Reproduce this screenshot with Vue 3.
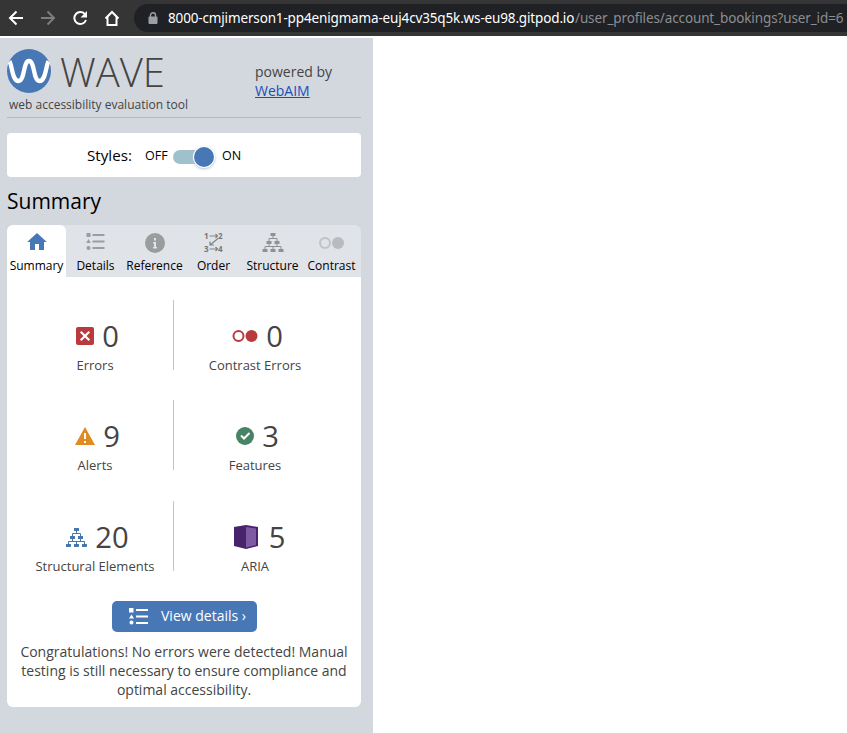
<script setup>
const tabs = [
  { name: 'Summary', icon: 'home' },
  { name: 'Details', icon: 'list' },
  { name: 'Reference', icon: 'info' },
  { name: 'Order', icon: 'order' },
  { name: 'Structure', icon: 'tree' },
  { name: 'Contrast', icon: 'rings' },
]
const counts = [
  { id: 'error', value: 0, label: 'Errors' },
  { id: 'contrast', value: 0, label: 'Contrast Errors' },
  { id: 'alert', value: 9, label: 'Alerts' },
  { id: 'feature', value: 3, label: 'Features' },
  { id: 'structure', value: 20, label: 'Structural Elements' },
  { id: 'aria', value: 5, label: 'ARIA' },
]
</script>

<template>
  <div class="page">
    <header class="browser">
      <svg class="nav" width="120" height="36" viewBox="0 0 120 36" fill="none" stroke="#fff" stroke-width="2">
        <path d="M23 18H10M16.500 11.500L10 18l6.500 6.500" />
        <path d="M41 18h13M47.500 11.500L54 18l-6.500 6.500" stroke="#7d7d7d" />
        <path d="M85.200 14.500A6 6 0 1 0 86 20" />
        <path d="M87 11v6.500h-6.500z" fill="#fff" stroke="none" />
        <path d="M105.500 18.500L112 12l6.500 6.500M107.500 17v8h9v-8" />
      </svg>
      <div class="address">
        <svg class="lock" width="10" height="13" viewBox="0 0 10 13">
          <path d="M2.500 5V3.300a2.500 2.500 0 0 1 5 0V5" fill="none" stroke="#9aa0a6" stroke-width="1.400" />
          <rect x=".5" y="4.500" width="9" height="7.500" rx="1" fill="#9aa0a6" />
        </svg>
        <span class="host">8000-cmjimerson1-pp4enigmama-euj4cv35q5k.ws-eu98.gitpod.io</span><span class="path">/user_profiles/account_bookings?user_id=6</span>
      </div>
    </header>

    <aside class="wave">
      <div class="brand">
        <div class="identity">
          <div class="logo">
            <svg width="44" height="44" viewBox="0 0 44 44">
              <circle cx="22" cy="22" r="22" fill="#4877b6" />
              <path d="M2.500 12.500C5 15.500 5 32 11.500 32C18 32 16 12 22 12S26 32 32.500 32C39 32 39 15.500 41.500 12.500" fill="none" stroke="#fff" stroke-width="4.300" />
            </svg>
            <span class="wordmark">WAVE</span>
          </div>
          <div class="tagline">web accessibility evaluation tool</div>
        </div>
        <div class="powered">powered by<br><a>WebAIM</a></div>
      </div>

      <div class="styles">
        <span class="styles-label">Styles:</span>
        <span class="off">OFF</span>
        <span class="switch"><i></i></span>
        <span class="on">ON</span>
      </div>

      <h2>Summary</h2>

      <nav class="tabs">
        <div v-for="tab in tabs" :key="tab.name" class="tab" :class="{ active: tab.icon === 'home' }">
          <svg width="30" height="24" viewBox="0 0 30 24" :class="tab.icon">
            <path v-if="tab.icon === 'home'" d="M15 3L5.200 12H8v8h5v-6h4v6h5v-8h2.800z" fill="#4877b6" />
            <g v-else-if="tab.icon === 'list'" fill="#9b9ea1">
              <path d="M5.500 3h4v4h-4zM7.500 9l2.300 4H5.200zM11.500 4h12v2h-12zM11.500 10.500h12v2h-12zM11.500 17h12v2h-12z" />
              <circle cx="7.500" cy="18" r="2" />
            </g>
            <g v-else-if="tab.icon === 'info'">
              <circle cx="15" cy="13" r="10" fill="#9b9c9e" />
              <path d="M14 8h2v2.500h-2zM13 12h3v5h1v1.500h-4V17h1v-3.500h-1z" fill="#e0e3e8" />
            </g>
            <g v-else-if="tab.icon === 'order'" fill="none" stroke="#808386" stroke-width="1.200">
              <path d="M10.500 6h8M16.500 4l2 2-2 2M19 8.500l-8 6.500M11 11.500V15h4M10.500 19h8M16.500 17l2 2-2 2" />
              <text x="5" y="9">1</text><text x="19" y="9">2</text>
              <text x="5" y="22">3</text><text x="19" y="22">4</text>
            </g>
            <g v-else-if="tab.icon === 'tree'" fill="#8f9193" transform="translate(-.5)">
              <path d="M13 3h5v3h-5zM9 11h5v3H9zM17 11h5v3h-5zM5 19h5v3H5zM13 19h5v3h-5zM21 19h5v3h-5z" />
              <path d="M15.500 6v2.500M11.500 11V8.500h8V11M11.500 14v2.500M19.500 14v2.500M7.500 19v-2.500h16V19M15.500 16.500V19" fill="none" stroke="#8f9193" />
            </g>
            <g v-else>
              <circle cx="8" cy="13" r="5" fill="none" stroke="#c0c3c6" stroke-width="2" />
              <circle cx="21" cy="13" r="6" fill="#b9bcbf" />
            </g>
          </svg>
          <span>{{ tab.name }}</span>
        </div>
      </nav>

      <main class="panel">
        <div class="counts">
          <section v-for="item in counts" :key="item.id" class="count" :class="item.id">
            <div class="figure">
              <svg v-if="item.id === 'error'" width="18" height="18" viewBox="0 0 18 18">
                <rect width="18" height="18" rx="2" fill="#b93a3d" />
                <path d="M4.700 4.700l8.600 8.600M13.300 4.700l-8.600 8.600" stroke="#fff" stroke-width="2.200" />
              </svg>
              <svg v-else-if="item.id === 'contrast'" width="26" height="14" viewBox="0 0 26 14">
                <circle cx="6.500" cy="7" r="5" fill="none" stroke="#b93a3d" stroke-width="2" />
                <circle cx="19.500" cy="7" r="6" fill="#b93a3d" />
              </svg>
              <svg v-else-if="item.id === 'alert'" width="20" height="18" viewBox="0 0 20 18">
                <path d="M10 0l10 18H0z" fill="#df8b22" />
                <path d="M9 6h2v6H9zM9 14h2v2H9z" fill="#fff" />
              </svg>
              <svg v-else-if="item.id === 'feature'" width="18" height="18" viewBox="0 0 18 18">
                <circle cx="9" cy="9" r="9" fill="#478365" />
                <path d="M5 8.500l3 3 5.500-5.500" fill="none" stroke="#fff" stroke-width="2" />
              </svg>
              <svg v-else-if="item.id === 'structure'" width="21" height="19" viewBox="0 0 21 19">
                <path d="M8 0h5v3H8zM4 8h5v3H4zM12 8h5v3h-5zM0 16h5v3H0zM8 16h5v3H8zM16 16h5v3h-5z" fill="#4877ad" />
                <path d="M10.500 3v2.500M6.500 8V5.500h8V8M6.500 11v2.500M14.500 11v2.500M2.500 16v-2.500h16V16M10.500 13.500V16" fill="none" stroke="#4877ad" />
              </svg>
              <svg v-else width="24" height="24" viewBox="0 0 24 24">
                <path d="M0 2L12 0l12 2v19l-12 3-12-3z" fill="#48236c" />
                <path d="M12 2l10 1.500V20l-10 2.500z" fill="#7e5ba0" />
              </svg>
              <b>{{ item.value }}</b>
            </div>
            <div class="label">{{ item.label }}</div>
          </section>
        </div>
        <button class="details">
          <svg width="20" height="17" viewBox="0 0 20 17" fill="#fff">
            <path d="M0 0h4.500v4.500H0zM2.500 6.500l2.500 4H0zM7 1h12v2H7zM7 7.500h12v2H7zM7 14h12v2H7z" />
            <circle cx="2.500" cy="14.500" r="2" />
          </svg>
          <span>View details ›</span>
        </button>
        <p>Congratulations! No errors were detected! Manual<br>testing is still necessary to ensure compliance and<br>optimal accessibility.</p>
      </main>
    </aside>
  </div>
</template>

<style>
body { margin: 0; overflow: hidden; background: #fff; }
</style>

<style scoped>
* { box-sizing: border-box; }
.page { width: 847px; height: 733px; overflow: hidden; font-family: "Open Sans", sans-serif; color: #000; }
.browser { display: flex; height: 36px; background: #353535; }
.nav { flex: none; }
.address { display: flex; align-items: center; width: 713px; height: 28px; margin: 4px 0 0 14px; padding-left: 14px; border-radius: 14px 0 0 14px; background: #202124; white-space: nowrap; font: 13.500px/28px "Noto Sans", sans-serif; }
.lock { flex: none; margin-right: 10px; }
.host { width: 407px; flex: none; color: #fff; letter-spacing: -.15px; }
.path { color: #8b8e92; letter-spacing: -.12px; }
.wave { width: 373px; height: 695px; margin-top: 2px; padding: 11px 12px 0 7px; background: #d3d8df; }
.brand { display: flex; height: 69px; border-bottom: 1px solid #b3b9c3; color: #444; }
.identity { width: 248px; }
.logo { display: flex; height: 44px; }
.wordmark { margin-left: 9px; font-size: 40px; font-weight: 300; line-height: 46px; }
.tagline { padding-left: 2px; margin-top: 2px; font-size: 12px; line-height: 19px; white-space: nowrap; }
.powered { padding-top: 13px; font-size: 14px; line-height: 19px; }
.powered a { color: #1a4fb8; text-decoration: underline; }
.styles { display: flex; align-items: center; height: 44px; margin-top: 15px; padding-left: 80px; border-radius: 4px; background: #fff; font-size: 12.500px; }
.styles-label { width: 58px; font-size: 15.200px; }
.off { width: 28px; }
.switch { display: flex; justify-content: flex-end; align-items: center; width: 41px; height: 14px; margin: 3px 8px 0 0; border-radius: 7px; background: #9fc1cc; }
.switch i { flex: none; width: 20px; height: 20px; border-radius: 50%; background: #4877b6; box-shadow: 0 0 0 1px #fff, 0 1px 3px 1px #b5c1d1; }
h2 { margin: 8px 0 10px; height: 30px; font-size: 21px; font-weight: 400; line-height: 32px; }
.tabs { display: grid; grid-template-columns: repeat(6, 59px); height: 52px; border-radius: 6px 6px 0 0; background: #e0e3e8; }
.tab { display: flex; flex-direction: column; align-items: center; padding-top: 5px; border-radius: 6px 6px 0 0; font-size: 12px; line-height: 20px; white-space: nowrap; }
.tab span { margin-top: 2px; }
.active { background: #fff; }
.order text { fill: #737679; stroke: none; font: 700 8px "Open Sans", sans-serif; }
.panel { display: flex; flex-direction: column; align-items: center; height: 430px; border-radius: 0 0 6px 6px; background: #fff; }
.counts { display: grid; grid-template-columns: 157px 162px; grid-template-rows: 100px 101px 70px; align-self: flex-start; margin: 23px 0 0 10px; }
.count { height: 70px; padding-top: 16px; text-align: center; color: #444; }
.count:nth-child(odd) { border-right: 1px solid #c5c5c5; }
.figure { display: flex; justify-content: center; align-items: center; gap: 8px; height: 40px; padding-left: 5px; }
.figure b { font-size: 29.200px; font-weight: 400; line-height: 40px; }
.aria .figure { gap: 11px; padding-left: 9px; }
.label { font-size: 13px; line-height: 18px; }
.details { display: flex; align-items: center; width: 145px; height: 31px; margin-top: 30px; padding: 0 0 0 17px; border: 0; border-radius: 5px; background: #4877b6; color: #fff; font: 14px "Open Sans", sans-serif; white-space: nowrap; }
.details span { margin: -2px 0 0 12.500px; }
p { margin: 10px 0 0; color: #444; font-size: 14px; line-height: 19px; text-align: center; white-space: nowrap; }
</style>
